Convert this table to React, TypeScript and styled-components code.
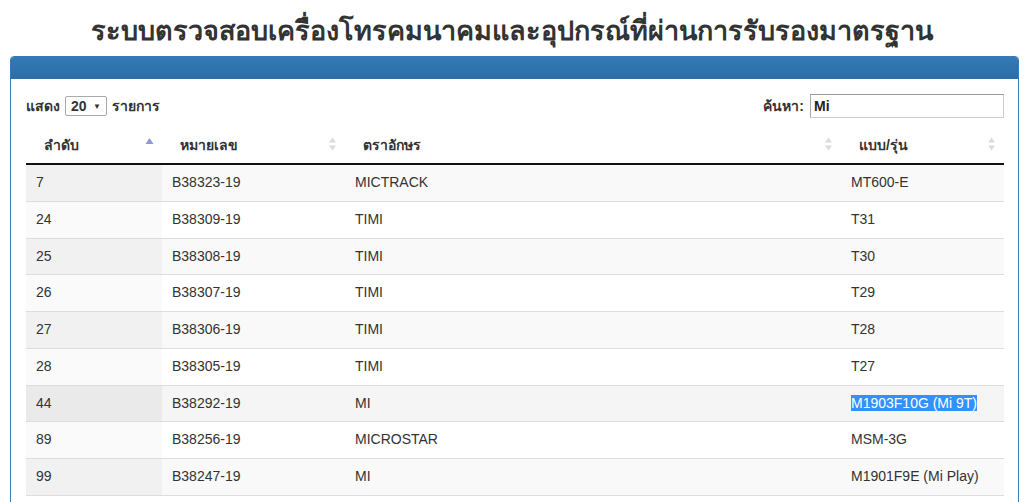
import styled, { createGlobalStyle } from "styled-components";

interface Row {
  no: number;
  code: string;
  brand: string;
  model: string;
  selected?: boolean;
  hover?: boolean;
}

const rows: Row[] = [
  { no: 7, code: "B38323-19", brand: "MICTRACK", model: "MT600-E" },
  { no: 24, code: "B38309-19", brand: "TIMI", model: "T31" },
  { no: 25, code: "B38308-19", brand: "TIMI", model: "T30" },
  { no: 26, code: "B38307-19", brand: "TIMI", model: "T29" },
  { no: 27, code: "B38306-19", brand: "TIMI", model: "T28" },
  { no: 28, code: "B38305-19", brand: "TIMI", model: "T27" },
  { no: 44, code: "B38292-19", brand: "MI", model: "M1903F10G (Mi 9T)", selected: true, hover: true },
  { no: 89, code: "B38256-19", brand: "MICROSTAR", model: "MSM-3G" },
  { no: 99, code: "B38247-19", brand: "MI", model: "M1901F9E (Mi Play)" },
];

const GlobalStyle = createGlobalStyle`
  body {
    margin: 0;
    background: #fff;
    font-family: "Liberation Sans", Arial, sans-serif;
    font-size: 14px;
    color: #333;
    overflow: hidden;
  }
`;

function SortIcon({ dir }: { dir: "asc" | "both" }) {
  if (dir === "asc") {
    return (
      <SortMark width="9" height="12" viewBox="0 0 9 12">
        <path d="M4.5 1 L8.5 7 L0.5 7 Z" fill="#8c9ad6" />
      </SortMark>
    );
  }
  return (
    <SortMark width="9" height="14" viewBox="0 0 9 14">
      <path d="M4.5 0.5 L8 5.5 L1 5.5 Z" fill="#dcdcdc" />
      <path d="M4.5 13.5 L8 8.5 L1 8.5 Z" fill="#dcdcdc" />
    </SortMark>
  );
}

function App() {
  return (
    <>
      <GlobalStyle />
      <Title>ระบบตรวจสอบเครื่องโทรคมนาคมและอุปกรณ์ที่ผ่านการรับรองมาตรฐาน</Title>
      <Panel>
        <PanelHead />
        <PanelBody>
          <Controls>
            <Length>
              แสดง
              <Select>
                20 <Caret>▼</Caret>
              </Select>
              รายการ
            </Length>
            <Search>
              ค้นหา:
              <SearchBox>Mi</SearchBox>
            </Search>
          </Controls>
          <Table>
            <colgroup>
              <col style={{ width: 136 }} />
              <col style={{ width: 183 }} />
              <col style={{ width: 496 }} />
              <col style={{ width: 163 }} />
            </colgroup>
            <thead>
              <tr>
                <Th>
                  ลำดับ <SortIcon dir="asc" />
                </Th>
                <Th>
                  หมายเลข <SortIcon dir="both" />
                </Th>
                <Th>
                  ตราอักษร <SortIcon dir="both" />
                </Th>
                <Th>
                  แบบ/รุ่น <SortIcon dir="both" />
                </Th>
              </tr>
            </thead>
            <tbody>
              {rows.map((r, i) => (
                <Tr key={r.no} $odd={i % 2 === 0} $hover={!!r.hover}>
                  <Td>{r.no}</Td>
                  <Td>{r.code}</Td>
                  <Td>{r.brand}</Td>
                  <Td>{r.selected ? <Selected>{r.model}</Selected> : r.model}</Td>
                </Tr>
              ))}
            </tbody>
          </Table>
        </PanelBody>
      </Panel>
    </>
  );
}

const Title = styled.h1`
  margin: 0;
  height: 56px;
  padding-top: 13px;
  box-sizing: border-box;
  text-align: center;
  font-size: 27px;
  font-weight: 600;
  line-height: 36px;
  color: #333;
  font-family: Tahoma, "Liberation Sans", sans-serif;
`;

const Panel = styled.div`
  margin: 0 5px 0 10px;
  border: 1px solid #337ab7;
  border-radius: 4px;
  background: #fff;
`;

const PanelHead = styled.div`
  height: 22px;
  background: linear-gradient(#337ab7, #2e6da4);
  border-radius: 3px 3px 0 0;
`;

const PanelBody = styled.div`
  padding: 14px 14px 30px 15px;
`;

const Controls = styled.div`
  display: flex;
  justify-content: space-between;
  align-items: center;
  height: 26px;
  margin-bottom: 7px;
`;

const Length = styled.label`
  display: flex;
  align-items: center;
  gap: 5px;
  font-weight: 700;
  font-size: 14px;
  color: #333;
`;

const Select = styled.span`
  display: inline-flex;
  align-items: center;
  justify-content: space-between;
  box-sizing: border-box;
  width: 42px;
  height: 20px;
  padding: 0 5px;
  border: 1px solid #aaa;
  border-radius: 2px;
  font-size: 14px;
`;

const Caret = styled.span`
  font-size: 8px;
`;

const Search = styled.label`
  display: flex;
  align-items: center;
  gap: 6px;
  font-weight: 700;
  font-size: 14px;
  color: #333;
`;

const SearchBox = styled.span`
  width: 186px;
  height: 20px;
  padding: 1px 3px;
  border: 1px solid #ccc;
  border-top-color: #999;
  border-left-color: #aaa;
  font-weight: 700;
  font-size: 14px;
  line-height: 20px;
  color: #222;
`;

const Table = styled.table`
  width: 978px;
  border-collapse: collapse;
  table-layout: fixed;
  border-bottom: 1px solid #ddd;
`;

const Th = styled.th`
  position: relative;
  height: 37px;
  padding: 0 30px 0 18px;
  text-align: left;
  font-size: 14px;
  font-weight: 700;
  color: #333;
  border-bottom: 2px solid #111;
`;

const SortMark = styled.svg`
  position: absolute;
  right: 8px;
  top: 11px;
`;

const Tr = styled.tr<{ $odd: boolean; $hover: boolean }>`
  background: ${(p) => (p.$hover ? "#f5f5f5" : p.$odd ? "#f9f9f9" : "#fff")};

  & > td:first-child {
    background: ${(p) => (p.$hover ? "#eaeaea" : p.$odd ? "#f1f1f1" : "#fafafa")};
  }
`;

const Td = styled.td`
  height: 19.75px;
  padding: 8px 10px;
  border-top: 1px solid #ddd;
  line-height: 19.75px;
  color: #333;
  white-space: nowrap;
`;

const Selected = styled.span`
  background: #3390ff;
  color: #fff;
`;

export default App;
